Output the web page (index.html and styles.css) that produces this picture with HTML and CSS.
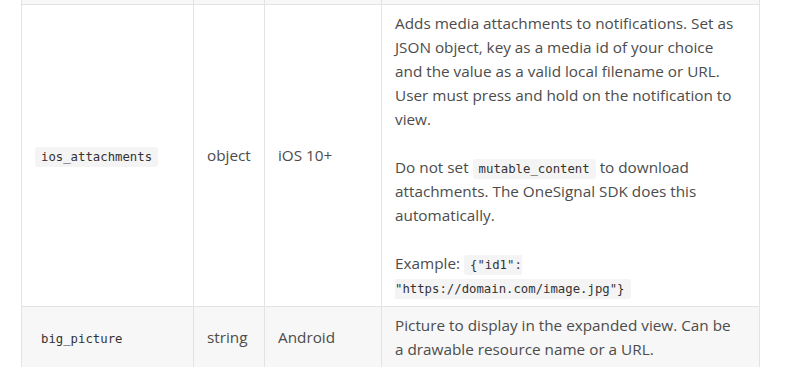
FILE: index.html
```html
<!DOCTYPE html>
<html>
<head>
<meta charset="utf-8">
<link rel="stylesheet" href="styles.css">
</head>
<body>
<div class="page">
  <table class="params">
    <colgroup>
      <col class="c-name">
      <col class="c-type">
      <col class="c-platform">
      <col class="c-desc">
    </colgroup>
    <tbody>
      <tr class="row-prev"><td></td><td></td><td></td><td></td></tr>
      <tr class="main">
        <td><code>ios_attachments</code></td>
        <td>object</td>
        <td>iOS 10+</td>
        <td class="desc">
          <p>Adds media attachments to notifications. Set as JSON object, key as a media id of your choice and the value as a valid local filename or URL. User must press and hold on the notification to view.</p>
          <p>Do not set <code>mutable_content</code> to download attachments. The OneSignal SDK does this automatically.</p>
          <p>Example: <code>{"id1": "https://domain.com/image.jpg"}</code></p>
        </td>
      </tr>
      <tr class="alt">
        <td><code class="plain">big_picture</code></td>
        <td>string</td>
        <td>Android</td>
        <td class="desc">
          <p>Picture to display in the expanded view. Can be a drawable resource name or a URL.</p>
        </td>
      </tr>
    </tbody>
  </table>
</div>
</body>
</html>
```

FILE: styles.css
```css
html, body {
  margin: 0;
  padding: 0;
  background: #ffffff;
}

.page {
  padding-left: 21px;
  font-family: "Open Sans", "Noto Sans", sans-serif;
  font-size: 15.3px;
  line-height: 24px;
  color: #4c4c4c;
}

.params {
  border-collapse: collapse;
  table-layout: fixed;
  width: 738px;
}

.c-name { width: 172px; }
.c-type { width: 71px; }
.c-platform { width: 117px; }
.c-desc { width: 378px; }

.params td {
  border: 1px solid #e3e3e3;
  padding: 6px 13px 6px 13px;
  vertical-align: middle;
}

.main td {
  padding-bottom: 7px;
}

.params td.desc {
  padding-right: 17px;
}

.row-prev td {
  background: #f7f7f7;
  height: 4px;
  padding: 0;
  border-top: none;
}

.alt td {
  background: #f7f7f7;
  padding-bottom: 8px;
}

.desc p {
  margin: 0 0 24px 0;
}

.desc p:last-child {
  margin-bottom: 0;
}

code {
  font-family: "DejaVu Sans Mono", "Liberation Mono", monospace;
  font-size: 12.3px;
  line-height: 1;
  color: #333333;
  background: #f4f4f4;
  border-radius: 3px;
  padding: 3px 6px;
}

code.plain {
  background: transparent;
}
```
